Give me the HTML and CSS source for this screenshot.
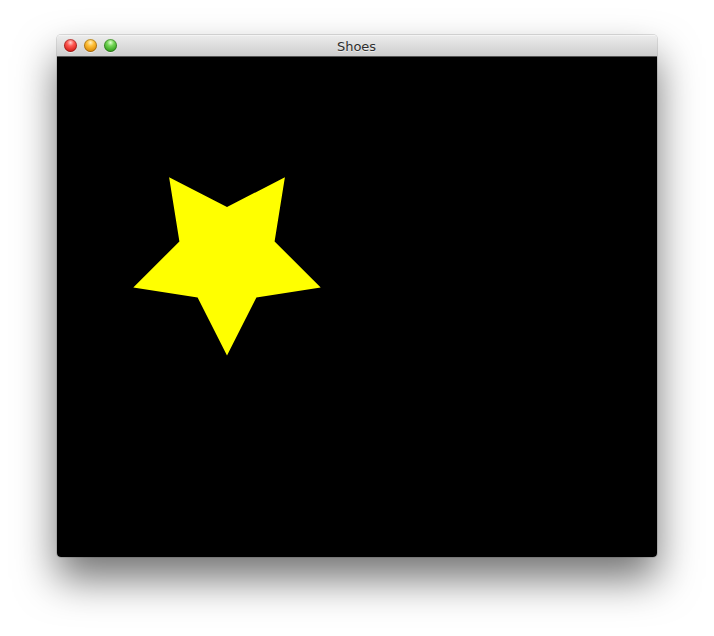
FILE: index.html
```html
<!DOCTYPE html>
<html>
<head>
<meta charset="utf-8">
<link rel="stylesheet" href="styles.css">
</head>
<body>
<div class="window">
  <div class="titlebar">
    <div class="lights">
      <span class="light red"></span>
      <span class="light yellow"></span>
      <span class="light green"></span>
    </div>
    <div class="title">Shoes</div>
  </div>
  <div class="content">
    <svg class="canvas" width="600" height="500" viewBox="0 0 600 500">
      <path d="M170,298.5 L140.6,240.5 L76.3,230.4 L122.4,184.5 L112.1,120.3 L170,150 L227.9,120.3 L217.6,184.5 L263.7,230.4 L199.4,240.5 Z" fill="#ffff00"/>
    </svg>
  </div>
</div>
</body>
</html>
```
FILE: styles.css
```css
html, body {
  margin: 0;
  padding: 0;
  background: #ffffff;
}
body {
  padding: 35px 0 0 57px;
  height: 636px;
  box-sizing: border-box;
  overflow: hidden;
}
.window {
  width: 600px;
  border-radius: 4px;
  box-shadow: 0 22px 40px rgba(0,0,0,0.55), 0 0 0 1px rgba(0,0,0,0.12);
  overflow: hidden;
}
.titlebar {
  position: relative;
  background: linear-gradient(#ebebeb, #cdcdcd);
  border-top: 1px solid #f4f4f4;
  border-bottom: 1px solid #555555;
  box-sizing: border-box;
  height: 22px;
  display: flex;
  align-items: center;
  justify-content: center;
}
.lights {
  position: absolute;
  left: 7px;
  top: 3px;
  display: flex;
  gap: 7px;
}
.light {
  width: 13px;
  height: 13px;
  border-radius: 50%;
  box-shadow: inset 0 0 0 1px rgba(0,0,0,0.25), 0 1px 0 rgba(255,255,255,0.5);
}
.red {
  background: radial-gradient(circle at 50% 28%, #ffd0cd 0, #ff5a54 30%, #d8221c 72%, #a11a16 100%);
}
.yellow {
  background: radial-gradient(circle at 50% 28%, #fff0c0 0, #ffc13a 30%, #df8e0a 72%, #a8690a 100%);
}
.green {
  background: radial-gradient(circle at 50% 28%, #e0ffd0 0, #74d656 30%, #38a321 72%, #287b17 100%);
}
.title {
  font-family: "DejaVu Sans", sans-serif;
  font-size: 13px;
  color: #2e2e2e;
  text-shadow: 0 1px 0 rgba(255,255,255,0.6);
  margin-left: -1px;
}
.content {
  width: 600px;
  height: 500px;
  background: #000000;
}
.canvas {
  display: block;
}
```
